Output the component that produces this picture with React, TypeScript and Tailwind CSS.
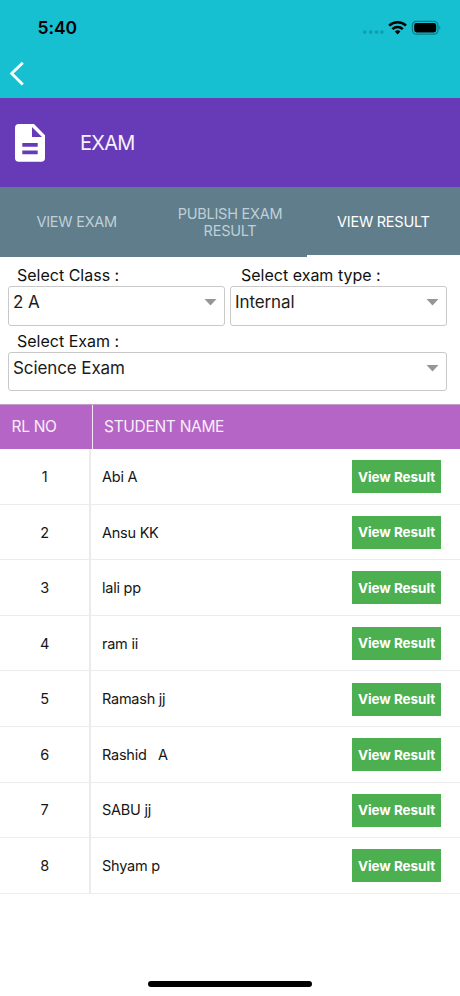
import React from "react";

const students = ["Abi A", "Ansu KK", "lali pp", "ram ii", "Ramash jj", "Rashid   A", "SABU jj", "Shyam p"];

function StatusBar() {
  return (
    <div className="flex h-[54px] items-start justify-between pl-[37.5px] pr-[19px] pt-[16px]">
      <span className="text-[17.5px] leading-[24px] font-semibold tracking-[-0.1px] text-black">5:40</span>
      <div className="flex pt-[3px]">
        <svg width="78" height="18" viewBox="0 0 78 18">
          <g fill="#0f9dab">
            <rect x="0" y="11.5" width="3.4" height="3.2" rx="1" />
            <rect x="6" y="11.5" width="3.4" height="3.2" rx="1" />
            <rect x="11.8" y="11.5" width="3.4" height="3.2" rx="1" />
            <rect x="17.2" y="11.5" width="3.4" height="3.2" rx="1" />
          </g>
          <g fill="none" stroke="#000" strokeWidth="2.5">
            <path d="M26.2 6.6a12.2 12.2 0 0 1 16.8 0" />
            <path d="M29.4 10.1a7.5 7.5 0 0 1 10.4 0" />
          </g>
          <path d="M31.8 12.6a4.1 4.1 0 0 1 5.6 0L34.6 15.5z" fill="#000" />
          <rect x="49.4" y="2.3" width="25.6" height="12.9" rx="4" fill="none" stroke="#0a7d88" strokeWidth="1.2" />
          <rect x="51.2" y="4.1" width="22" height="9.3" rx="2.4" fill="#000" />
          <path d="M76.4 6.8c1.3.6 1.3 3.3 0 3.9z" fill="#0a7d88" />
        </svg>
      </div>
    </div>
  );
}

function Field({ label, value, className, labelClass }: { label: string; value: string; className: string; labelClass: string }) {
  return (
    <div className={className}>
      <div className={`flex h-[22px] items-center whitespace-nowrap text-[16px] text-[#111] ${labelClass}`}>{label}</div>
      <div className="flex h-[39.5px] items-start justify-between rounded-[3px] border border-[#c9c9c9] pl-[4px] pr-[7.5px]">
        <span className="pt-[3px] text-[17px] leading-[24px] tracking-[-0.1px] text-[#1c1c1c]">{value}</span>
        <svg className="mt-[12px]" width="13" height="7" viewBox="0 0 13 7">
          <path d="M.5 0h12l-6 6.5z" fill="#969696" />
        </svg>
      </div>
    </div>
  );
}

export default function App() {
  return (
    <div className="flex h-[996px] w-[460px] flex-col overflow-hidden bg-white font-['Inter',sans-serif]">
      <header className="h-[98px] shrink-0 bg-[#16c0d1]">
        <StatusBar />
        <svg className="mt-[7px] ml-[9px]" width="16" height="26" viewBox="0 0 16 26">
          <path d="M13.8 1.7 2.6 12.5l11.2 10.9" fill="none" stroke="#fff" strokeWidth="2.8" />
        </svg>
      </header>

      <div className="flex h-[89px] shrink-0 items-center bg-[#673ab7] pl-[15px]">
        <svg className="shrink-0" width="30" height="38" viewBox="0 0 30 38">
          <path
            fillRule="evenodd"
            fill="#fff"
            d="M3.8 0H19l11 11.2V34a3.8 3.8 0 0 1-3.8 3.8H3.8A3.8 3.8 0 0 1 0 34V3.8A3.8 3.8 0 0 1 3.8 0ZM17 3v10h10ZM7.3 18.9v3.9h15.4v-3.9ZM7.3 26.4v3.8h15.4v-3.8Z"
          />
        </svg>
        <span className="pl-[35px] text-[20px] tracking-[-0.75px] text-[#f6f1fc]">EXAM</span>
      </div>

      <nav className="grid h-[70px] shrink-0 grid-cols-3 bg-[#607d8b] text-center text-[14.5px] leading-[17.5px] tracking-[-0.25px] text-[#bfd0d8]">
        <div className="flex items-center justify-center">VIEW EXAM</div>
        <div className="flex items-center justify-center">
          <span>PUBLISH EXAM<br />RESULT</span>
        </div>
        <div className="flex items-center justify-center border-b-2 border-white pt-[2px] text-white">VIEW RESULT</div>
      </nav>

      <section className="flex h-[147px] shrink-0 flex-col gap-[4px] pl-[8px] pr-[13px] pt-[7px]">
        <div className="flex gap-[5px]">
          <Field label="Select Class :" value="2 A" className="w-[217px]" labelClass="pl-[9px]" />
          <Field label="Select exam type :" value="Internal" className="w-[217px]" labelClass="pl-[11px]" />
        </div>
        <Field label="Select Exam :" value="Science Exam" className="w-full" labelClass="pl-[9px]" />
      </section>

      <div className="flex h-[45px] shrink-0 border-t border-[#c49ccc] bg-[#b565c5] text-[15.5px] tracking-[-0.3px] text-[#f9effb]">
        <div className="flex w-[93px] items-center border-r border-[#f5e9f7] pl-[11.5px]">RL NO</div>
        <div className="flex items-center pl-[11px]">STUDENT NAME</div>
      </div>

      <main>
        {students.map((name, i) => (
          <div key={name} className="flex h-[55.6px] border-b border-[#ececec] text-[14.5px] tracking-[-0.25px] text-[#161616]">
            <div className="flex w-[91px] items-center justify-center border-r-2 border-[#ebebeb] pt-px">{i + 1}</div>
            <div className="flex flex-1 items-center justify-between pt-px pl-[11px] pr-[19px]">
              <span className="whitespace-pre">{name}</span>
              <button className="h-[33px] w-[89px] bg-[#4caf50] text-[13.5px] font-bold tracking-[-0.05px] whitespace-nowrap text-white">View Result</button>
            </div>
          </div>
        ))}
      </main>

      <div className="mt-auto mb-[9px] ml-[148px] h-[6px] w-[164px] rounded-full bg-black" />
    </div>
  );
}
